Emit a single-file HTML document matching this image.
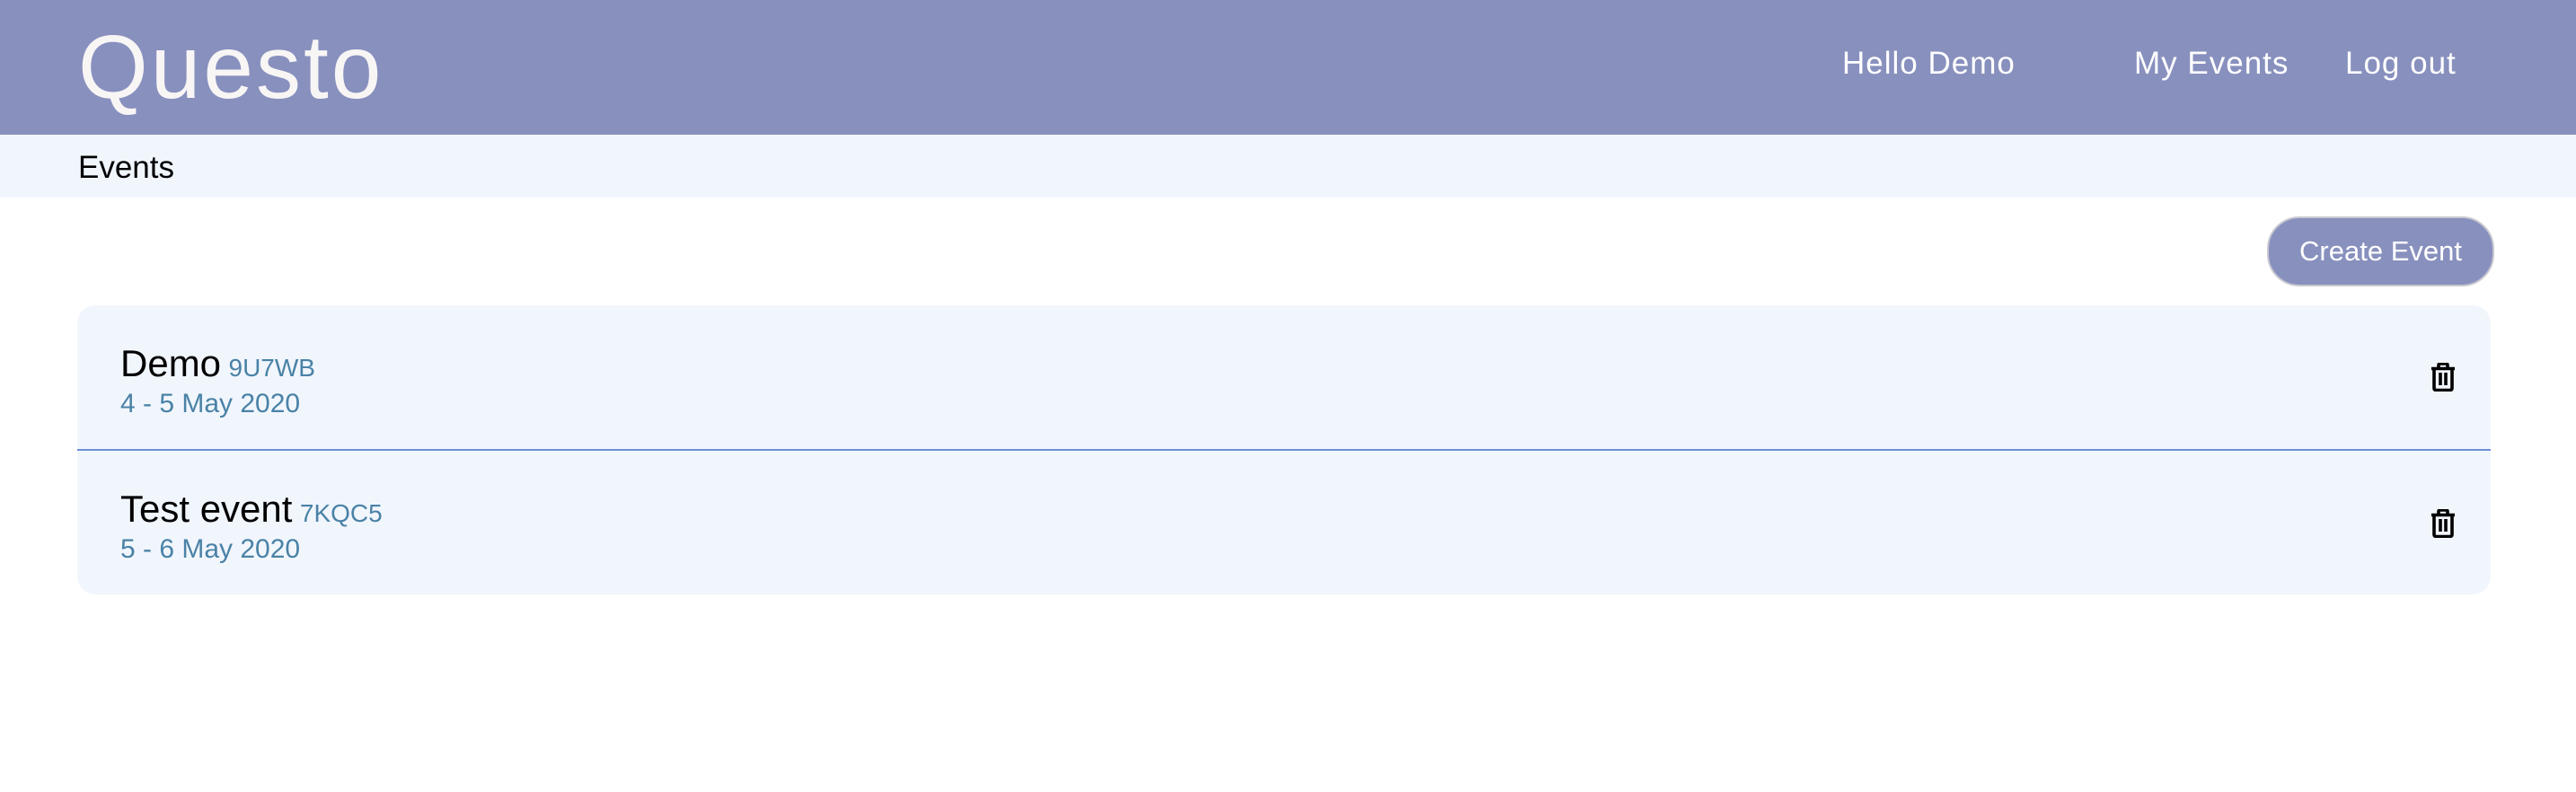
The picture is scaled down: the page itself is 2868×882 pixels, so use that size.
<!DOCTYPE html>
<html><head><meta charset="utf-8"><style>
*{margin:0;padding:0;box-sizing:border-box}
body{width:2868px;height:882px;background:#fff;font-family:"Liberation Sans",sans-serif;position:relative;overflow:hidden}
.hdr{position:absolute;left:0;top:0;width:2868px;height:150px;background:#8890be}
.abs{position:absolute;white-space:nowrap;line-height:1}
.logo{left:87px;top:25px;font-size:100px;color:#f8f5f5;letter-spacing:3px}
.nav{font-size:35px;color:#fff;top:53px;letter-spacing:1px}
.sub{position:absolute;left:0;top:150px;width:2868px;height:70px;background:#f1f6fd}
.btn{position:absolute;left:2524px;top:241px;width:253px;height:78px;border-radius:36px;background:#8890be;border:2px solid #c8c8d0;color:#fff;font-size:31px;text-align:center;line-height:74px}
.card{position:absolute;left:86px;top:340px;width:2687px;height:322px;background:#f1f6fd;border-radius:20px}
.div{position:absolute;left:86px;top:500px;width:2687px;height:2px;background:#6c8fd6}
.t{font-size:42px;color:#000}
.c{font-size:28px;color:#4a82a6;margin-left:4px}
.d{font-size:30px;color:#4a82a6}
</style></head><body>
<div class="hdr"></div>
<div class="abs logo">Questo</div>
<div class="abs nav" style="left:2051px">Hello Demo</div>
<div class="abs nav" style="left:2376px">My Events</div>
<div class="abs nav" style="left:2611px">Log out</div>
<div class="sub"></div>
<div class="abs" style="left:87px;top:169px;font-size:35px;color:#000">Events</div>
<div class="btn">Create Event</div>
<div class="card"></div>
<div class="div"></div>
<div class="abs" style="left:134px;top:384px"><span class="t">Demo</span> <span class="c">9U7WB</span></div>
<div class="abs d" style="left:134px;top:435px">4 - 5 May 2020</div>
<div class="abs" style="left:134px;top:546px"><span class="t">Test event</span> <span class="c">7KQC5</span></div>
<div class="abs d" style="left:134px;top:597px">5 - 6 May 2020</div>
<svg class="abs" style="left:2706px;top:404px" width="28" height="32" viewBox="0 0 28 32"><path d="M9 5V2.5Q9 1 11 1H17Q19 1 19 2.5V5M1 6.5H27M4 7V28Q4 30.5 6.5 30.5H21.5Q24 30.5 24 28V7M11 11V25M17 11V25" fill="none" stroke="#000" stroke-width="3.6"/></svg>
<svg class="abs" style="left:2706px;top:567px" width="28" height="32" viewBox="0 0 28 32"><path d="M9 5V2.5Q9 1 11 1H17Q19 1 19 2.5V5M1 6.5H27M4 7V28Q4 30.5 6.5 30.5H21.5Q24 30.5 24 28V7M11 11V25M17 11V25" fill="none" stroke="#000" stroke-width="3.6"/></svg>
</body></html>
